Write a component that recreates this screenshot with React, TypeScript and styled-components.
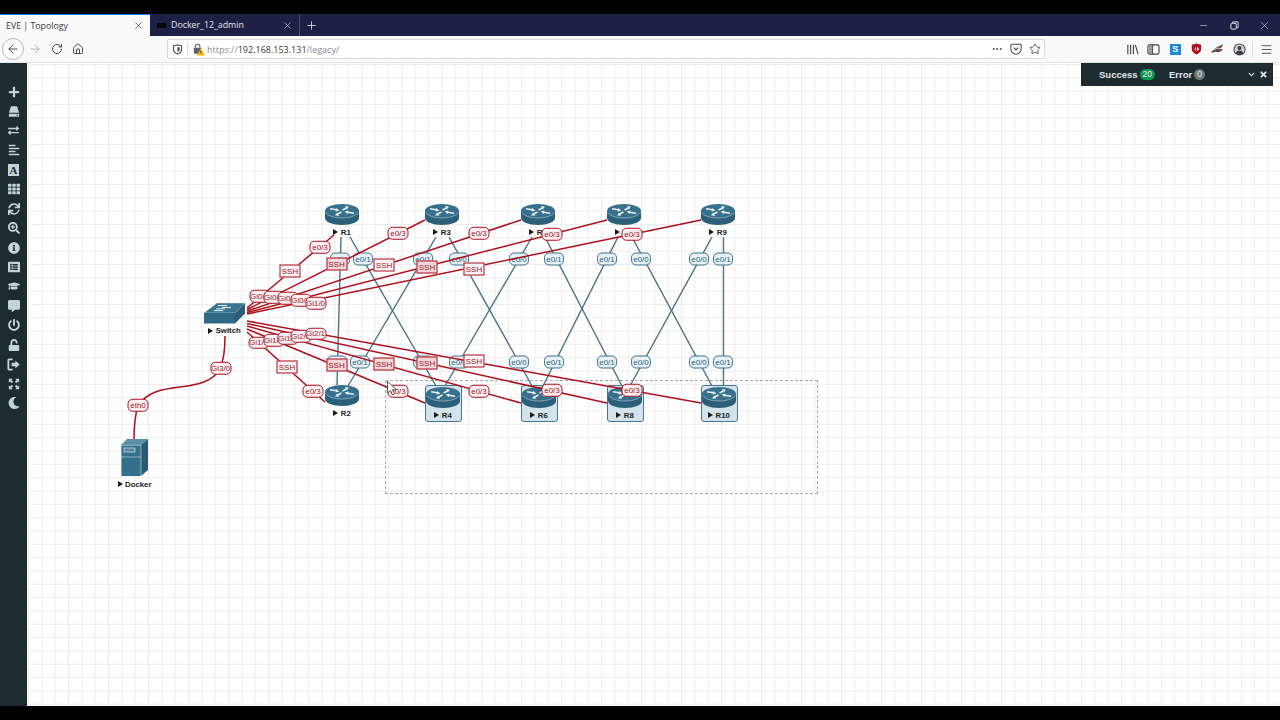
import React from 'react';
import styled, { createGlobalStyle } from 'styled-components';
import { ArrowLeft, ArrowRight, RotateCw, Home, X, Plus, Minus, Star, MoreHorizontal, Menu } from 'lucide-react';
import {
	FaPlus,
	FaExchangeAlt,
	FaAlignLeft,
	FaTh,
	FaSync,
	FaSearchPlus,
	FaInfoCircle,
	FaListAlt,
	FaGraduationCap,
	FaCommentAlt,
	FaPowerOff,
	FaUnlock,
	FaMoon,
	FaTimes,
	FaChevronDown,
} from 'react-icons/fa';

// canvas starts here on the page, the diagram data below is in page coordinates
const ORIGIN_X = 27;
const ORIGIN_Y = 63;

const routers = [
	{ name: 'R1', x: 342, y: 204 },
	{ name: 'R3', x: 442, y: 204 },
	{ name: 'R5', x: 538, y: 204 },
	{ name: 'R7', x: 624, y: 204 },
	{ name: 'R9', x: 718, y: 204 },
	{ name: 'R2', x: 342, y: 385 },
	{ name: 'R4', x: 443, y: 385, picked: true },
	{ name: 'R6', x: 539, y: 385, picked: true },
	{ name: 'R8', x: 625, y: 385, picked: true },
	{ name: 'R10', x: 719, y: 385, picked: true },
];

const dataLinks = [
	[341, 237, 337, 385],
	[350, 237, 436, 386],
	[436, 237, 348, 386],
	[449, 237, 532, 386],
	[532, 237, 445, 386],
	[545, 237, 622, 386],
	[618, 237, 543, 386],
	[632, 237, 712, 386],
	[712, 237, 630, 386],
	[723.5, 237, 723.5, 386],
];

const mgmtLinks = [
	[247, 308, 334, 235],
	[247, 309.5, 425, 220],
	[247, 311, 521, 220],
	[247, 312.5, 607, 220],
	[247, 314, 701, 220],
	[247, 321, 701, 403],
	[247, 323.5, 607, 403],
	[247, 326, 521, 403],
	[247, 329, 425, 403],
	[247, 332, 325, 402],
];

const ethLabels = [
	['e0/0', 340, 259],
	['e0/1', 363, 259],
	['e0/1', 423, 259],
	['e0/0', 459, 259],
	['e0/0', 519, 259],
	['e0/1', 554, 259],
	['e0/1', 607, 259],
	['e0/0', 641, 259],
	['e0/0', 699, 259],
	['e0/1', 723, 259],
	['e0/0', 337, 362],
	['e0/1', 360, 362],
	['e0/1', 423, 362],
	['e0/0', 459, 362],
	['e0/0', 519, 362],
	['e0/1', 554, 362],
	['e0/1', 607, 362],
	['e0/0', 641, 362],
	['e0/0', 699, 362],
	['e0/1', 723, 362],
] as const;

const portLabels = [
	['Gi0/0', 259.5, 296],
	['Gi0/1', 273.5, 297],
	['Gi0/2', 287.5, 298],
	['Gi0/3', 300.5, 300],
	['Gi1/0', 315.5, 303],
	['Gi1/1', 258.5, 342.5],
	['Gi1/2', 273.5, 340],
	['Gi1/3', 287.5, 338],
	['Gi2/0', 300.5, 336],
	['Gi2/1', 315.5, 333.5],
	['e0/3', 320, 247],
	['e0/3', 398, 233],
	['e0/3', 479, 233],
	['e0/3', 552, 234],
	['e0/3', 632, 234],
	['e0/3', 313, 391],
	['e0/3', 398, 391],
	['e0/3', 479, 391],
	['e0/3', 552, 390],
	['e0/3', 632, 390],
	['Gi3/0', 220.5, 368],
	['eth0', 138, 405],
] as const;

const sshLabels = [
	[290, 271, false],
	[336.5, 264, true],
	[384, 265, false],
	[427, 267, true],
	[474, 269, false],
	[287, 367, false],
	[336.5, 365, true],
	[384, 364, true],
	[427, 362.5, true],
	[474, 361, false],
] as const;

const DriveIcon = () => (
	<svg viewBox='0 0 14 14' width='12' height='13'>
		<path d='M3.5 1h7L13 8.5H1z' fill='currentColor' />
		<rect x='1' y='9.5' width='12' height='3.5' rx='0.5' fill='currentColor' />
		<rect x='10' y='10.7' width='1.6' height='1.2' fill='#1e2b31' />
	</svg>
);

const LogoutIcon = () => (
	<svg viewBox='0 0 14 14' width='13' height='13'>
		<path d='M6 1.5H2.5a1 1 0 0 0-1 1v9a1 1 0 0 0 1 1H6' fill='none' stroke='currentColor' strokeWidth='2' />
		<path d='M5 5.2h4V2.6L13.6 7 9 11.4V8.8H5z' fill='currentColor' />
	</svg>
);

const ExpandIcon = () => (
	<svg viewBox='0 0 14 14' width='12' height='12'>
		<path d='M1 1h4.500L4 2.500 6 4.500 4.500 6 2.500 4 1 5.500z' fill='currentColor' />
		<path d='M13 1H8.500L10 2.500 8 4.500 9.500 6l2-2L13 5.500z' fill='currentColor' />
		<path d='M1 13h4.500L4 11.500 6 9.500 4.500 8l-2 2L1 8.500z' fill='currentColor' />
		<path d='M13 13H8.500l1.500-1.500-2-2L9.500 8l2 2L13 8.500z' fill='currentColor' />
	</svg>
);

const RouterIcon = () => (
	<svg viewBox='0 0 34 21' width='34' height='21'>
		<path d='M0 7v7c0 4 7.6 7 17 7s17-3 17-7V7z' fill='#2b5f7a' />
		<ellipse cx='17' cy='7' rx='17' ry='7' fill='#36708c' />
		<path d='M0.5 8.5C3 12 9.5 14 17 14s14-2 16.5-5.5' fill='none' stroke='#cfe0e8' strokeWidth='0.5' />
		<g fill='none' stroke='#e6eff3' strokeWidth='1.5'>
			<path d='M5 4.8l6.5 1' />
			<path d='M29 9.2l-6.5-1' />
			<path d='M17.5 6l4-2' />
			<path d='M16.5 8l-4 2' />
		</g>
		<g fill='#e6eff3'>
			<polygon points='14.5,6.4 10.5,7.6 11.2,4' />
			<polygon points='19.5,7.6 23.5,6.4 22.8,10' />
			<polygon points='24,2.6 19.8,2.2 21.8,5.4' />
			<polygon points='10,11.4 14.2,11.8 12.2,8.6' />
		</g>
	</svg>
);

const SwitchIcon = () => (
	<svg viewBox='0 0 41 21' width='41' height='21'>
		<polygon points='0,10 13,0 41,0 31,10' fill='#3a7490' stroke='#cfe0e8' strokeWidth='0.5' />
		<rect x='0' y='10' width='31' height='10.5' fill='#2f6985' />
		<polygon points='31,10 41,0 41,10.5 31,20.5' fill='#2a5d77' />
		<g fill='none' stroke='#e6eff3' strokeWidth='1'>
			<path d='M14 2.6h9M27 4.400h-9M12 5.800h9M19 7.600h-9' />
		</g>
	</svg>
);

const ServerIcon = () => (
	<svg viewBox='0 0 27 37' width='27' height='37'>
		<polygon points='0,6 6,0 27,0 20,6' fill='#5c90a8' />
		<polygon points='20,6 27,0 27,31 20,37' fill='#2a5a73' />
		<rect x='0' y='6' width='20' height='31' fill='#33708c' />
		<path d='M0 6.3h20M0 18h20M20 6v31M0.3 6v31' stroke='#c9dde6' strokeWidth='0.6' fill='none' />
		<rect x='3' y='9' width='11' height='4' fill='#4f859e' stroke='#dbe8ee' strokeWidth='0.7' />
	</svg>
);

const ShieldIcon = () => (
	<svg viewBox='0 0 12 12' width='11' height='11'>
		<path d='M6 1l4.500 1v4c0 2.500-2 4-4.500 5C3.500 10 1.500 8.500 1.500 6V2z' fill='none' stroke='#3f3f46' strokeWidth='1.1' />
		<path d='M6 3.200l2.400.5v2.300c0 1.300-1 2.200-2.400 2.800z' fill='#3f3f46' />
	</svg>
);

const LockWarnIcon = () => (
	<svg viewBox='0 0 14 14' width='13' height='13'>
		<path d='M3.500 5V3.800a2.500 2.500 0 0 1 5 0V5' fill='none' stroke='#5f5f66' strokeWidth='1.2' />
		<rect x='2' y='5' width='8' height='6.500' rx='1' fill='#5f5f66' />
		<polygon points='9.500,6 14,13.500 5,13.500' fill='#f5b400' />
		<rect x='9.100' y='8.500' width='0.900' height='2.600' fill='#3a2a00' />
	</svg>
);

const PocketIcon = () => (
	<svg viewBox='0 0 14 14' width='12' height='12'>
		<path d='M2 1.500h10a1 1 0 0 1 1 1V7a6 6 0 0 1-12 0V2.500a1 1 0 0 1 1-1z' fill='none' stroke='#4a4a4f' strokeWidth='1.2' />
		<path d='M4.500 5.500L7 8l2.500-2.500' fill='none' stroke='#4a4a4f' strokeWidth='1.3' />
	</svg>
);

const LibraryIcon = () => (
	<svg viewBox='0 0 14 14' width='13' height='13'>
		<path d='M2 2v10M5 2v10M8 2v10M10 2l3 10' fill='none' stroke='#3f3f46' strokeWidth='1.2' />
	</svg>
);

const SidebarPanelIcon = () => (
	<svg viewBox='0 0 14 14' width='13' height='13'>
		<rect x='1' y='2' width='12' height='10' rx='2' fill='none' stroke='#3f3f46' strokeWidth='1.2' />
		<rect x='2' y='3' width='3.500' height='8' fill='#9a9aa0' />
		<path d='M6 2v10' stroke='#3f3f46' strokeWidth='1' />
	</svg>
);

const RedShieldIcon = () => (
	<svg viewBox='0 0 12 14' width='11' height='12'>
		<path d='M6 0.500l5.500 1.500v5c0 3-2.500 5-5.500 6.500C3 12 0.500 10 0.500 7V2z' fill='#a9111f' />
		<path d='M4 5h1.200v4H4zM6.500 5h1a1.500 2 0 0 1 0 4h-1z' fill='#e9c5c5' />
	</svg>
);

const BirdIcon = () => (
	<svg viewBox='0 0 16 12' width='15' height='12'>
		<path d='M1 10C4 6 7 4 14 1c-1 3-2 4-4 5 1 .5 2 .5 4 0-2 3-5 4-8 3-2 .5-3 1-5 1z' fill='#5a4a45' />
		<path d='M3 7c3-1 6-2 10-2' stroke='#f2f2f2' strokeWidth='0.8' fill='none' />
		<circle cx='11.500' cy='3.500' r='0.900' fill='#c8392b' />
	</svg>
);

const AccountIcon = () => (
	<svg viewBox='0 0 14 14' width='13' height='13'>
		<circle cx='7' cy='7' r='6' fill='#d8d8da' stroke='#3f3f46' strokeWidth='1.1' />
		<circle cx='7' cy='5.400' r='2.300' fill='#3f3f46' />
		<path d='M2.800 11c.8-2 2.300-2.800 4.200-2.800s3.400.8 4.200 2.800c-1 1-2.600 1.600-4.200 1.600S3.800 12 2.800 11z' fill='#3f3f46' />
	</svg>
);

const RestoreIcon = () => (
	<svg viewBox='0 0 10 10' width='9' height='9'>
		<rect x='1' y='2.500' width='6' height='6.500' rx='1' fill='none' stroke='#e6e6ea' strokeWidth='1.1' />
		<path d='M3 2V1h6v6.500H7.500' fill='none' stroke='#e6e6ea' strokeWidth='1' />
	</svg>
);

const App = () => {
	const sideIcons = [
		<FaPlus />,
		<DriveIcon />,
		<FaExchangeAlt size={11} />,
		<FaAlignLeft />,
		<FontBox>A</FontBox>,
		<FaTh />,
		<FaSync />,
		<FaSearchPlus />,
		<FaInfoCircle />,
		<FaListAlt />,
		<FaGraduationCap />,
		<FaCommentAlt />,
		<FaPowerOff />,
		<FaUnlock />,
		<LogoutIcon />,
		<ExpandIcon />,
		<FaMoon />,
	];

	return (
		<Page>
			<GlobalStyle />
			<BlackBar />
			<TabBar>
				<ActiveTab>
					<TabTitle>EVE | Topology</TabTitle>
					<X size={11} strokeWidth={1.6} color='#3f3f46' />
				</ActiveTab>
				<IdleTab>
					<TabFavicon />
					<TabTitle $idle>Docker_12_admin</TabTitle>
					<X size={11} strokeWidth={1.6} color='#b8bac8' />
				</IdleTab>
				<NewTab>
					<Plus size={13} strokeWidth={1.5} color='#e6e6ea' />
				</NewTab>
				<WindowControls>
					<WindowButton>
						<Minus size={11} strokeWidth={1.2} color='#e6e6ea' />
					</WindowButton>
					<WindowButton>
						<RestoreIcon />
					</WindowButton>
					<WindowButton>
						<X size={13} strokeWidth={1} color='#e6e6ea' />
					</WindowButton>
				</WindowControls>
			</TabBar>
			<Toolbar>
				<NavGroup>
					<BackButton>
						<ArrowLeft size={14} strokeWidth={1.5} color='#38383d' />
					</BackButton>
					<ForwardButton>
						<ArrowRight size={14} strokeWidth={1.5} color='#a9a9ae' />
					</ForwardButton>
					<ToolButton>
						<RotateCw size={12} strokeWidth={1.8} color='#38383d' />
					</ToolButton>
					<ToolButton>
						<Home size={12} strokeWidth={1.8} color='#38383d' />
					</ToolButton>
				</NavGroup>
				<UrlBar>
					<UrlIcons>
						<ShieldIcon />
						<UrlDivider />
						<LockWarnIcon />
					</UrlIcons>
					<UrlText>
						https://<UrlHost>192.168.153.131</UrlHost>/legacy/
					</UrlText>
					<UrlActions>
						<MoreHorizontal size={12} strokeWidth={2} color='#4a4a4f' />
						<PocketIcon />
						<Star size={12} strokeWidth={1.6} color='#38383d' />
					</UrlActions>
				</UrlBar>
				<ExtensionGroup>
					<ExtensionCell>
						<LibraryIcon />
					</ExtensionCell>
					<ExtensionCell>
						<SidebarPanelIcon />
					</ExtensionCell>
					<ExtensionCell>
						<SkypeBadge>S</SkypeBadge>
					</ExtensionCell>
					<ExtensionCell>
						<RedShieldIcon />
					</ExtensionCell>
					<ExtensionCell>
						<BirdIcon />
					</ExtensionCell>
					<ExtensionCell>
						<AccountIcon />
					</ExtensionCell>
					<ToolDivider />
					<ExtensionCell>
						<Menu size={13} strokeWidth={1.5} color='#38383d' />
					</ExtensionCell>
				</ExtensionGroup>
			</Toolbar>
			<Main>
				<Sidebar>
					{sideIcons.map((icon, i) => (
						<SideItem key={i}>{icon}</SideItem>
					))}
				</Sidebar>
				<Canvas>
					<Selection />
					<LinkLayer viewBox={`${ORIGIN_X} ${ORIGIN_Y} 1253 643`}>
						{dataLinks.map((l, i) => (
							<line key={i} x1={l[0]} y1={l[1]} x2={l[2]} y2={l[3]} stroke='#4a7488' strokeWidth='1.4' />
						))}
					</LinkLayer>
					{routers.map((r) => (
						<NetNode key={r.name} $x={r.x} $y={r.y} $picked={r.picked}>
							<RouterIcon />
							<NodeName $gap={2.5}>
								<PlayMark />
								{r.name}
							</NodeName>
						</NetNode>
					))}
					<NetNode $x={224.5} $y={303}>
						<SwitchIcon />
						<NodeName $gap={2}>
							<PlayMark />
							Switch
						</NodeName>
					</NetNode>
					<NetNode $x={134.5} $y={439}>
						<ServerIcon />
						<NodeName $gap={3.5}>
							<PlayMark />
							Docker
						</NodeName>
					</NetNode>
					{ethLabels.map(([text, x, y], i) => (
						<LinkLabel key={i} $x={x} $y={y} $kind='eth'>
							{text}
						</LinkLabel>
					))}
					<LinkLayer viewBox={`${ORIGIN_X} ${ORIGIN_Y} 1253 643`}>
						{mgmtLinks.map((l, i) => (
							<line key={i} x1={l[0]} y1={l[1]} x2={l[2]} y2={l[3]} stroke='#ae0f1c' strokeWidth='1.5' />
						))}
						<path
							d='M225 336C225 350 224 360 220 368C214 382 196 385 180 387C160 389 147 393 138 405C135 416 134 428 134 439'
							fill='none'
							stroke='#ae0f1c'
							strokeWidth='1.5'
						/>
					</LinkLayer>
					{portLabels.map(([text, x, y], i) => (
						<LinkLabel key={i} $x={x} $y={y} $kind='port'>
							{text}
						</LinkLabel>
					))}
					{sshLabels.map(([x, y, tint], i) => (
						<LinkLabel key={i} $x={x} $y={y} $kind='ssh' $tint={tint}>
							SSH
						</LinkLabel>
					))}
					<Pointer viewBox='0 0 10 15' width='10' height='15'>
						<path d='M0.500 0.500v11.500l3-2.500 2 4.500 2-1-2-4.300h4z' fill='#fff' stroke='#333' strokeWidth='0.8' />
					</Pointer>
					<NoticePanel>
						<NoticeText>Success</NoticeText>
						<NoticeBadge $ok>20</NoticeBadge>
						<NoticeText $gap>Error</NoticeText>
						<NoticeBadge>0</NoticeBadge>
						<NoticeActions>
							<FaChevronDown size={7} />
							<FaTimes size={9} />
						</NoticeActions>
					</NoticePanel>
				</Canvas>
			</Main>
			<BlackBar />
		</Page>
	);
};

const GlobalStyle = createGlobalStyle`
	html, body {
		margin: 0;
		padding: 0;
		background: #000;
	}
	* {
		box-sizing: border-box;
	}
`;

const Page = styled.div`
	display: flex;
	flex-direction: column;
	width: 1280px;
	height: 720px;
	overflow: hidden;
	font-family: 'Liberation Sans', Arial, sans-serif;
	background: #000;
`;

const BlackBar = styled.div`
	flex: 0 0 14px;
	background: #000;
`;

const TabBar = styled.div`
	display: flex;
	flex: 0 0 22px;
	background: #1c2045;
`;

const ActiveTab = styled.div`
	display: flex;
	align-items: center;
	justify-content: space-between;
	width: 150px;
	padding: 0 6px;
	background: #f9f9fa;
	border-top: 1px solid #0a84ff;
`;

const IdleTab = styled.div`
	display: flex;
	align-items: center;
	width: 150px;
	padding: 0 6px 0 7px;
	border-right: 1px solid #4a4d6b;
`;

const TabTitle = styled.span<{ $idle?: boolean }>`
	flex: ${(props) => (props.$idle ? 1 : 'none')};
	font-family: 'Open Sans', sans-serif;
	font-size: 8.8px;
	color: ${(props) => (props.$idle ? '#e6e6ea' : '#38383d')};
`;

const TabFavicon = styled.div`
	width: 9px;
	height: 5px;
	margin-right: 5px;
	background: #08080c;
`;

const NewTab = styled.div`
	display: flex;
	align-items: center;
	justify-content: center;
	width: 22px;
`;

const WindowControls = styled.div`
	display: flex;
	align-items: center;
	margin-left: auto;
`;

const WindowButton = styled.div`
	display: flex;
	align-items: center;
	justify-content: center;
	width: 30.5px;
	height: 100%;
`;

const Toolbar = styled.div`
	display: flex;
	align-items: center;
	flex: 0 0 27px;
	background: #f9f9fa;
	border-bottom: 1px solid #e4e4e6;
`;

const NavGroup = styled.div`
	display: flex;
	align-items: center;
	width: 167px;
	padding-left: 2px;
`;

const ToolButton = styled.div`
	display: flex;
	align-items: center;
	justify-content: center;
	width: 21px;
	height: 22px;
`;

const BackButton = styled(ToolButton)`
	width: 22px;
	background: #fff;
	border: 1px solid #b8b8bb;
	border-radius: 50%;
`;

const ForwardButton = styled(ToolButton)`
	width: 22px;
`;

const UrlBar = styled.div`
	display: flex;
	align-items: center;
	width: 878px;
	height: 20px;
	background: #fff;
	border: 1px solid #d8d8da;
	border-radius: 2px;
`;

const UrlIcons = styled.div`
	display: flex;
	align-items: center;
	gap: 4px;
	width: 39px;
	padding-left: 4px;
`;

const UrlDivider = styled.div`
	width: 1px;
	height: 13px;
	background: #dcdcde;
`;

const UrlText = styled.div`
	flex: 1;
	font-family: 'Open Sans', sans-serif;
	font-size: 9px;
	color: #8a8a8f;
`;

const UrlHost = styled.span`
	color: #38383d;
`;

const UrlActions = styled.div`
	display: flex;
	align-items: center;
	gap: 7px;
	padding-right: 3px;
`;

const ExtensionGroup = styled.div`
	display: flex;
	align-items: center;
	margin-left: 77px;
`;

const ExtensionCell = styled.div`
	display: flex;
	align-items: center;
	justify-content: center;
	width: 21.3px;
`;

const SkypeBadge = styled.div`
	display: flex;
	align-items: center;
	justify-content: center;
	width: 11px;
	height: 11px;
	font-size: 9px;
	font-weight: 700;
	color: #fff;
	background: #1e8ad6;
`;

const ToolDivider = styled.div`
	width: 1px;
	height: 16px;
	margin: 0 3px 0 2.5px;
	background: #e0e0e2;
`;

const Main = styled.div`
	display: flex;
	flex: 1;
	min-height: 0;
`;

const Sidebar = styled.div`
	display: flex;
	flex-direction: column;
	flex: 0 0 27px;
	padding-top: 19.3px;
	color: #c4d3da;
	background: #1e2b31;
`;

const SideItem = styled.div`
	display: flex;
	align-items: center;
	justify-content: center;
	height: 19.44px;
	font-size: 12px;
`;

const FontBox = styled.div`
	display: flex;
	align-items: center;
	justify-content: center;
	width: 11px;
	height: 12px;
	font-family: 'Liberation Serif', serif;
	font-size: 11px;
	font-weight: 700;
	color: #1e2b31;
	background: #c4d3da;
`;

const Canvas = styled.div`
	position: relative;
	flex: 1;
	overflow: hidden;
	background-color: #fff;
	background-image: linear-gradient(#ececec 1px, transparent 1px), linear-gradient(90deg, #ececec 1px, transparent 1px);
	background-size: 13.33px 13.33px;
	background-position: 1px 1px;
`;

const LinkLayer = styled.svg`
	position: absolute;
	top: 0;
	left: 0;
	width: 1253px;
	height: 643px;
`;

const Selection = styled.div`
	position: absolute;
	left: ${385 - ORIGIN_X}px;
	top: ${380 - ORIGIN_Y}px;
	width: 433px;
	height: 114px;
	border: 1px dashed #a8a8a8;
`;

const NetNode = styled.div<{ $x: number; $y: number; $picked?: boolean }>`
	position: absolute;
	left: ${(props) => props.$x - ORIGIN_X - (props.$picked ? 18.5 : 20)}px;
	top: ${(props) => props.$y - ORIGIN_Y}px;
	display: flex;
	flex-direction: column;
	align-items: center;
	width: ${(props) => (props.$picked ? '37px' : '40px')};
	height: ${(props) => (props.$picked ? '37px' : 'auto')};
	padding-top: ${(props) => (props.$picked ? '1px' : '0')};
	background: ${(props) => (props.$picked ? '#d4e3eb' : 'transparent')};
	border: ${(props) => (props.$picked ? '1.5px solid #47768d' : 'none')};
	border-radius: 3px;
`;

const NodeName = styled.div<{ $gap: number }>`
	display: flex;
	align-items: center;
	gap: 2.5px;
	margin-top: ${(props) => props.$gap}px;
	font-size: 7.8px;
	font-weight: 700;
	line-height: 9px;
	color: #222;
	white-space: nowrap;
`;

const PlayMark = styled.span`
	width: 0;
	height: 0;
	border-top: 3.5px solid transparent;
	border-bottom: 3.5px solid transparent;
	border-left: 5px solid #1b1b1b;
`;

const LinkLabel = styled.div<{ $x: number; $y: number; $kind: 'eth' | 'port' | 'ssh'; $tint?: boolean }>`
	position: absolute;
	left: ${(props) => props.$x - ORIGIN_X}px;
	top: ${(props) => props.$y - ORIGIN_Y}px;
	display: flex;
	align-items: center;
	justify-content: center;
	width: ${(props) => (props.$kind === 'eth' ? '20px' : '21px')};
	height: ${(props) => (props.$kind === 'port' ? '12.5px' : '13px')};
	overflow: hidden;
	font-size: 8px;
	white-space: nowrap;
	transform: translate(-50%, -50%);
	color: ${(props) => (props.$kind === 'eth' ? '#2f627b' : '#96182c')};
	background: ${(props) => {
		if (props.$kind === 'eth') return '#e6f1f6';
		if (props.$kind === 'port') return '#fdeff1';
		return props.$tint ? '#f4d6d9' : '#fbf3f3';
	}};
	border: 1.5px solid ${(props) => (props.$kind === 'eth' ? '#3f7189' : '#a90f20')};
	border-radius: ${(props) => (props.$kind === 'ssh' ? '0' : '5px')};
`;

const Pointer = styled.svg`
	position: absolute;
	left: ${387 - ORIGIN_X}px;
	top: ${381 - ORIGIN_Y}px;
`;

const NoticePanel = styled.div`
	position: absolute;
	top: 0;
	right: 7px;
	display: flex;
	align-items: center;
	width: 192px;
	height: 22.5px;
	padding-left: 18px;
	padding-right: 5px;
	color: #e4e9ec;
	background: #1e2b31;
`;

const NoticeText = styled.span<{ $gap?: boolean }>`
	margin-left: ${(props) => (props.$gap ? '14px' : '0')};
	font-size: 9.5px;
	font-weight: 700;
`;

const NoticeBadge = styled.span<{ $ok?: boolean }>`
	display: inline-block;
	min-width: 10px;
	margin-left: 2px;
	padding: 0 3px;
	font-size: 8.5px;
	line-height: 11px;
	text-align: center;
	color: #e4f3ea;
	background: ${(props) => (props.$ok ? '#0f9555' : '#6c767d')};
	border-radius: 5.5px;
`;

const NoticeActions = styled.div`
	display: flex;
	align-items: center;
	gap: 4.5px;
	margin-left: auto;
`;

export default App;
